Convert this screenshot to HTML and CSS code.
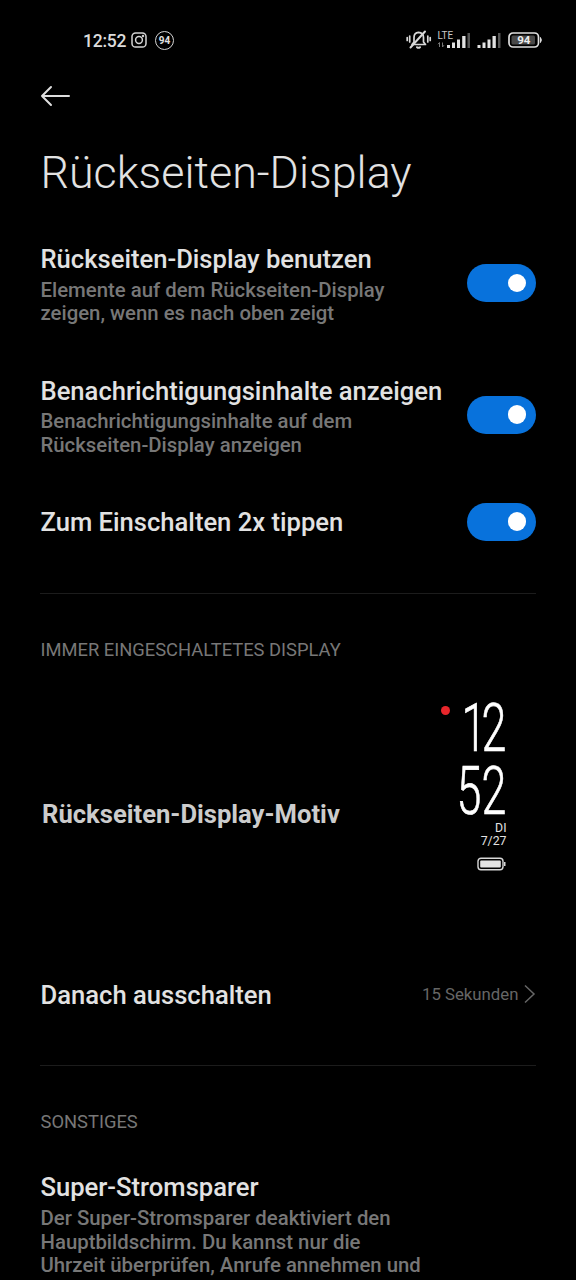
FILE: index.html
```html
<!DOCTYPE html>
<html lang="de">
<head>
<meta charset="utf-8">
<title>Rückseiten-Display</title>
<link rel="stylesheet" href="styles.css">
</head>
<body>
<div class="screen">
  <header class="status">
    <span class="status-time">12:52</span>
    <svg class="insta" width="16" height="16" viewBox="0 0 16 16" fill="none" stroke="#d4d4d4" stroke-width="1.5"><rect x="1" y="1" width="14" height="14" rx="3.6"/><circle cx="8" cy="8" r="3.4"/><circle cx="12" cy="4" r=".5"/></svg>
    <span class="ring">94</span>
    <svg class="signals" width="144" height="24" viewBox="0 0 144 24">
      <g fill="none" stroke="#d8d8d8" stroke-width="1.7" stroke-linecap="round" stroke-linejoin="round">
        <path d="M7 16.5H20.5L18.5 14V9.5C18.5 6.5 16.5 4.5 13.5 4.3C11 4.5 9 6.5 9 9.5V14L7 16.5"/>
        <path d="M5.5 19.5L20 3.5" stroke-width="2"/>
        <path d="M12 19.2Q13.5 20.4 15 19.2" stroke-width="2"/>
        <path d="M4.7 8V14M2.2 9.5V12.5M22.8 8V14M25.2 9.5V12.5"/>
      </g>
      <text class="lte" x="32.5" y="10.5" textLength="15.5" lengthAdjust="spacingAndGlyphs">LTE</text>
      <path d="M34.5 19V14.5M33 16.2L34.5 14.5M37.5 14.5V19M39 17.2L37.5 19" stroke="#777" fill="none"/>
      <g fill="#e2e2e2"><path d="M42 17h3v3h-3zM47 14.5h3V20h-3zM52 11.5h3V20h-3zM57.2 8h3.3v12h-3.3z"/><path d="M72.5 17h3v3h-3zM77.5 14.5h3V20h-3zM82.5 11.5h3V20h-3zM87.5 8h3.3v12h-3.3z"/></g>
      <path d="M62.5 5h2.5v15h-2.5zM93 5h2.5v15H93z" fill="#555"/>
      <rect x="104" y="5" width="29.5" height="14" rx="4" fill="none" stroke="#dedede" stroke-width="1.7"/>
      <rect x="106.5" y="7.5" width="23.5" height="9" rx="1.5" fill="#484848"/>
      <path d="M135.5 9.5q1.7 2.5 0 5z" fill="#dedede" stroke="#dedede"/>
      <text class="batt" x="118.8" y="16" text-anchor="middle">94</text>
    </svg>
  </header>
  <nav class="nav"><svg width="32" height="24" viewBox="0 0 32 24" fill="none" stroke="#dedede" stroke-width="2" stroke-linecap="round" stroke-linejoin="round"><path d="M29 12H2M11 3L2 12L11 21"/></svg></nav>
  <h1 class="title">Rückseiten-Display</h1>
  <main>
    <section class="row row-tall">
      <div class="copy"><h2>Rückseiten-Display benutzen</h2><p>Elemente auf dem Rückseiten-Display<br>zeigen, wenn es nach oben zeigt</p></div>
      <span class="toggle"></span>
    </section>
    <section class="row row-tall">
      <div class="copy"><h2>Benachrichtigungsinhalte anzeigen</h2><p>Benachrichtigungsinhalte auf dem<br>Rückseiten-Display anzeigen</p></div>
      <span class="toggle"></span>
    </section>
    <section class="row row-single"><h2>Zum Einschalten 2x tippen</h2><span class="toggle"></span></section>
    <div class="divider"></div>
    <h3>IMMER EINGESCHALTETES DISPLAY</h3>
    <section class="row theme">
      <h2 class="theme-name">Rückseiten-Display-Motiv</h2>
      <div class="preview">
        <span class="dot"></span>
        <div class="clock">
          <span class="digits hour">12</span>
          <span class="digits">52</span>
          <span class="date">DI<br>7/27</span>
          <svg width="30" height="14" viewBox="0 0 30 14"><rect x="1" y="1.2" width="25" height="11.6" rx="3" fill="none" stroke="#d8d8d8" stroke-width="1.4"/><rect x="3.2" y="3.4" width="20.6" height="7.2" rx="1" fill="#e4e4e4"/><path d="M27 5h1.5v4H27z" fill="#d8d8d8"/></svg>
        </div>
      </div>
    </section>
    <section class="row after"><h2>Danach ausschalten</h2><span class="value">15 Sekunden</span><svg class="chev" width="12" height="20" viewBox="0 0 12 20" fill="none" stroke="#666" stroke-width="1.5"><path d="M1 1.5L10 10L1 18.5"/></svg></section>
    <div class="divider"></div>
    <h3>SONSTIGES</h3>
    <section class="copy saver"><h2>Super-Stromsparer</h2><p>Der Super-Stromsparer deaktiviert den<br>Hauptbildschirm. Du kannst nur die<br>Uhrzeit überprüfen, Anrufe annehmen und</p></section>
  </main>
</div>
</body>
</html>
```
FILE: styles.css
```css
* { box-sizing: border-box; }
body { margin: 0; background: #000; }
.screen { width: 576px; height: 1280px; overflow: hidden; background: #000; color: #e2e2e2; font-family: Roboto, sans-serif; }
h1, h2, h3, p { margin: 0; }
.status { height: 80px; display: flex; align-items: center; padding: 0 27px 0 83px; }
.status-time { width: 43px; font-size: 17.5px; letter-spacing: -.25px; font-weight: 500; line-height: 22px; padding-top: 1px; color: #dcdcdc; }
.insta { margin-left: 5px; }
.ring { width: 19px; height: 19px; margin-left: 8px; border: 1.5px solid #d4d4d4; border-radius: 50%; font-size: 10px; font-weight: 700; line-height: 17px; text-align: center; }
.signals { margin-left: auto; }
.lte { font: 10.5px Roboto, sans-serif; fill: #c8c8c8; }
.batt { font: 700 11.5px Roboto, sans-serif; fill: #eee; }
.nav { height: 32px; padding-left: 39.5px; display: flex; align-items: center; }
.title { height: 132px; padding: 31px 0 0 40.5px; font-size: 44.8px; line-height: 60px; font-weight: 300; white-space: nowrap; }
.row { display: flex; align-items: flex-start; justify-content: space-between; padding: 0 40.5px; }
.row-tall { height: 131.5px; }
.row-tall .toggle { margin-top: 20px; }
h2 { font-size: 25.6px; line-height: 31px; font-weight: 500; white-space: nowrap; }
p { margin-top: 3.6px; font-size: 20.35px; line-height: 23.7px; font-weight: 500; color: #777; white-space: nowrap; }
.toggle { width: 68.5px; height: 38px; flex: none; display: flex; align-items: center; justify-content: flex-end; padding-right: 9.5px; border-radius: 19px; background: #0872dc; }
.toggle::before { content: ""; width: 18.5px; height: 18.5px; border-radius: 50%; background: #fff; }
.row-single { height: 86px; }
.row-single .toggle { margin-top: -4.5px; }
.divider { height: 1px; margin: 0 40px; background: #1c1c1c; }
h3 { height: 56px; padding: 0 40.5px; margin-top: 28px; font-size: 18.35px; line-height: 56px; font-weight: 400; color: #777; }
.theme { height: 275px; padding-left: 42px; }
.theme-name { margin-top: 121px; font-weight: 700; color: #ccc; }
.preview { display: flex; padding: 19px 29px 0 0; }
.dot { width: 9px; height: 9px; margin-top: 9px; border-radius: 50%; background: #e8262b; }
.clock { width: 57px; display: flex; flex-direction: column; align-items: flex-end; }
.digits { font-size: 67px; line-height: 63px; font-weight: 300; color: #fff; -webkit-text-stroke: .7px #fff; transform: scaleX(.67); transform-origin: right; }
.hour { letter-spacing: -7.5px; margin-right: 5px; }
.date { margin-top: -1px; font-size: 12.3px; line-height: 12.5px; text-align: right; }
.clock svg { margin-top: 10px; }
.after { height: 112px; padding-top: 27px; }
.value { margin: 3px 5px 0 auto; font-size: 16.8px; line-height: 22px; color: #666; }
.chev { margin-top: 4px; }
.saver { padding: 21.5px 40.5px 0; }
.saver p { margin-top: 4.5px; }
```
